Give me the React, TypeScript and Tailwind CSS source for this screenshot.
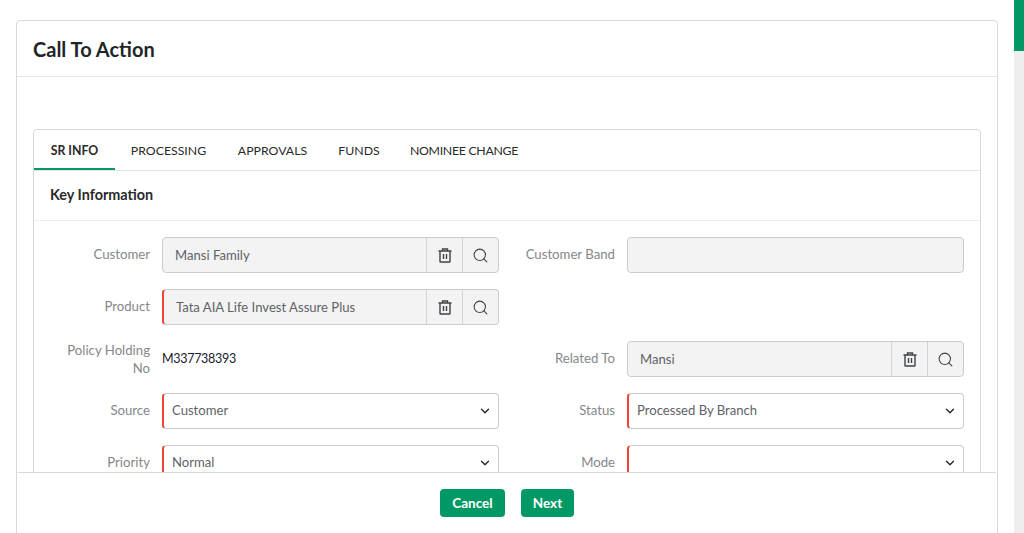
import React from "react";
import { Search, ChevronDown } from "lucide-react";

const font = "font-['Lato','Noto_Sans',sans-serif]";

function Trash() {
  return (
    <svg width="14" height="15" viewBox="0 0 14 15" fill="none" stroke="#3f4348" strokeWidth="1.4">
      <path d="M0.5 3h13" strokeWidth="1.5" />
      <path d="M4.5 3V1h5V3" />
      <path d="M2 3v10.4c0 .4.2.6.6.6h8.8c.4 0 .6-.2.6-.6V3" />
      <path d="M5.5 6v5M8.5 6v5" />
    </svg>
  );
}

function Label({ children, raised = true }: { children: React.ReactNode; raised?: boolean }) {
  return (
    <div
      className={`w-[100px] shrink-0 text-right text-[13.2px] leading-[18px] text-[#85878a] ${raised ? "pb-0.5" : ""}`}
    >
      {children}
    </div>
  );
}

function Lookup({ value, required }: { value: string; required?: boolean }) {
  return (
    <div
      className={`flex h-9 flex-1 items-stretch rounded border border-[#cccccc] bg-[#f3f3f3] ${
        required ? "border-l-2 border-l-[#f44336]" : ""
      }`}
    >
      <div className="flex flex-1 items-center pl-3 pt-0.5 text-[13.1px] text-[#5f6368]">{value}</div>
      <div className="flex w-9 items-center justify-center border-l border-[#d4d4d4]">
        <Trash />
      </div>
      <div className="flex w-9 items-center justify-center border-l border-[#d4d4d4]">
        <Search size={17} strokeWidth={1.5} color="#3f4348" />
      </div>
    </div>
  );
}

function Select({ value }: { value: string }) {
  return (
    <div className="flex h-9 flex-1 items-center justify-between rounded border border-[#cccccc] border-l-2 border-l-[#f44336] bg-white pl-2 pr-1.5 text-[13.1px] text-[#5f6368]">
      <span>{value}</span>
      <ChevronDown size={14} strokeWidth={2.2} color="#222222" />
    </div>
  );
}

function Row({
  label,
  raised = true,
  children,
}: {
  label: React.ReactNode;
  raised?: boolean;
  children: React.ReactNode;
}) {
  return (
    <div className="flex items-center gap-3">
      <Label raised={raised}>{label}</Label>
      {children}
    </div>
  );
}

export default function App() {
  return (
    <div className={`flex h-[533px] w-[1024px] overflow-hidden bg-white ${font}`}>
      <div className="flex-1 pl-4 pr-4 pt-5">
        <div className="flex h-[540px] w-[982px] flex-col rounded border border-[#d9d9d9] bg-white">
          <div className="flex h-14 shrink-0 items-center border-b border-[#e4e4e4] px-4 text-[20px] font-bold text-[#212529]">
            Call To Action
          </div>
          <div className="h-[395px] shrink-0 overflow-hidden px-4 pt-[52px]">
            <div className="h-[500px] rounded border border-[#d9d9d9]">
              <div className="flex h-[41px] items-stretch border-b border-[#e4e4e4] text-[12.3px] text-[#2a2a2a]">
                <div className="flex w-[81px] items-center justify-center border-b-2 border-[#009966] pt-1 font-bold">
                  SR INFO
                </div>
                <div className="flex w-[107px] items-center justify-center pt-0.5">PROCESSING</div>
                <div className="flex w-[101px] items-center justify-center pt-0.5">APPROVALS</div>
                <div className="flex w-[72px] items-center justify-center pt-0.5">FUNDS</div>
                <div className="flex w-[138px] items-center justify-center pt-0.5 tracking-[-0.3px]">
                  NOMINEE CHANGE
                </div>
              </div>
              <div className="flex h-[50px] items-center border-b border-[#eeeeee] px-4 pb-px text-[14.4px] font-bold text-[#2a2a2a]">
                Key Information
              </div>
              <div className="grid grid-cols-2 gap-x-4 gap-y-4 px-4 pt-4">
                <Row label="Customer">
                  <Lookup value="Mansi Family" />
                </Row>
                <Row label="Customer Band">
                  <div className="h-9 flex-1 rounded border border-[#cccccc] bg-[#f3f3f3]" />
                </Row>
                <Row label="Product">
                  <Lookup value="Tata AIA Life Invest Assure Plus" required />
                </Row>
                <div />
                <Row label="Policy Holding No" raised={false}>
                  <div className="flex h-9 flex-1 items-center text-[12.5px] tracking-[-0.3px] text-[#1a1a2e]">
                    M337738393
                  </div>
                </Row>
                <Row label="Related To">
                  <Lookup value="Mansi" />
                </Row>
                <Row label="Source">
                  <Select value="Customer" />
                </Row>
                <Row label="Status">
                  <Select value="Processed By Branch" />
                </Row>
                <Row label="Priority">
                  <Select value="Normal" />
                </Row>
                <Row label="Mode">
                  <Select value="" />
                </Row>
              </div>
            </div>
          </div>
          <div className="mx-px flex flex-1 justify-center gap-4 border-t border-[#d9d9d9] pt-4">
            <button className="h-7 w-[65px] rounded bg-[#009966] text-[13.5px] font-bold text-white">Cancel</button>
            <button className="h-7 w-[53px] rounded bg-[#009966] text-[13.5px] font-bold text-white">Next</button>
          </div>
        </div>
      </div>
      <div className="h-full w-2.5 shrink-0 bg-[#eeeeee]">
        <div className="h-[51px] bg-[#009966]" />
      </div>
    </div>
  );
}
